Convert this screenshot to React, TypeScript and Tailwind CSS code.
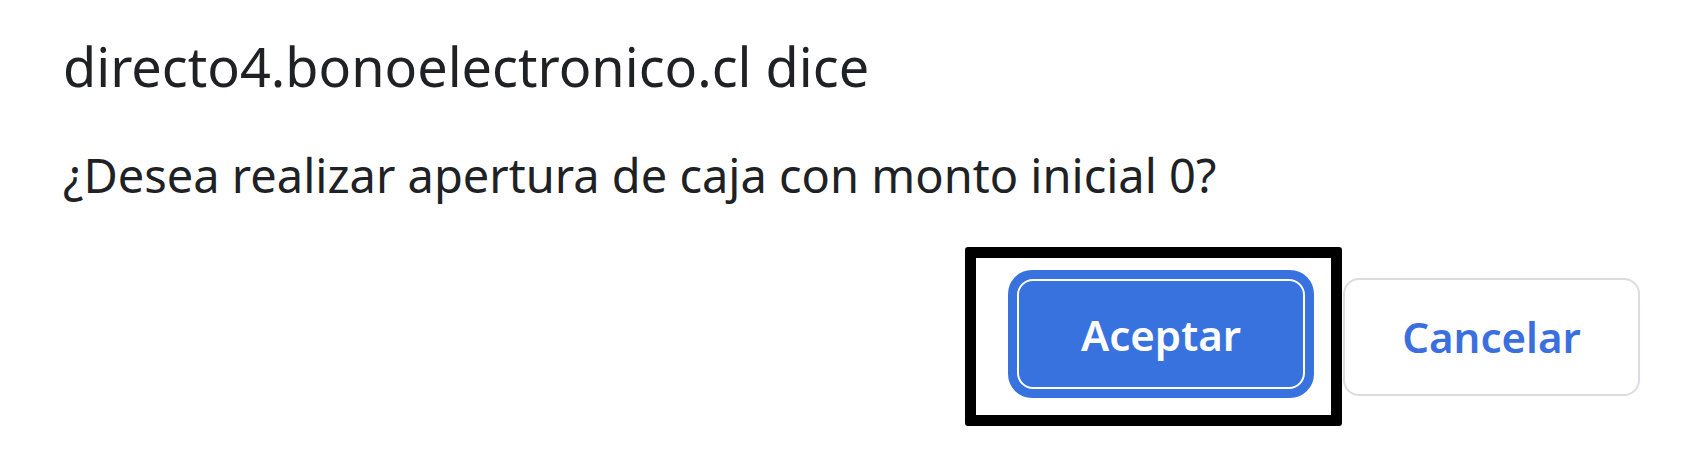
export default function App() {
  return (
    <div
      className="w-[1696px] h-[454px] bg-white overflow-hidden"
      style={{ fontFamily: '"Noto Sans", "Open Sans", sans-serif' }}
    >
      <div className="pl-[63px] pr-[56px] pt-[34px]">
        {/* title */}
        <h1 className="text-[54px] leading-[64px] text-[#202124] font-normal">
          directo4.bonoelectronico.cl dice
        </h1>
        {/* message */}
        <p className="mt-[49px] text-[47px] leading-[56px] text-[#202124]">
          ¿Desea realizar apertura de caja con monto inicial 0?
        </p>

        {/* buttons */}
        <div className="mt-[44px] flex items-center justify-end">
          <div className="border-[11px] border-black rounded-[3px] pl-[32px] pr-[17px] pt-[12px] pb-[17px]">
            <button className="w-[306px] h-[128px] rounded-[24px] bg-[#3872de] p-[9px]">
              <div className="w-full h-full rounded-[16px] border-2 border-white flex items-center justify-center text-white text-[42px] font-semibold">
                Aceptar
              </div>
            </button>
          </div>
          <button className="ml-px w-[297px] h-[118px] rounded-[16px] border-2 border-[#dadce0] bg-white flex items-center justify-center text-[#3b6fe0] text-[42px] font-semibold">
            Cancelar
          </button>
        </div>
      </div>
    </div>
  )
}
